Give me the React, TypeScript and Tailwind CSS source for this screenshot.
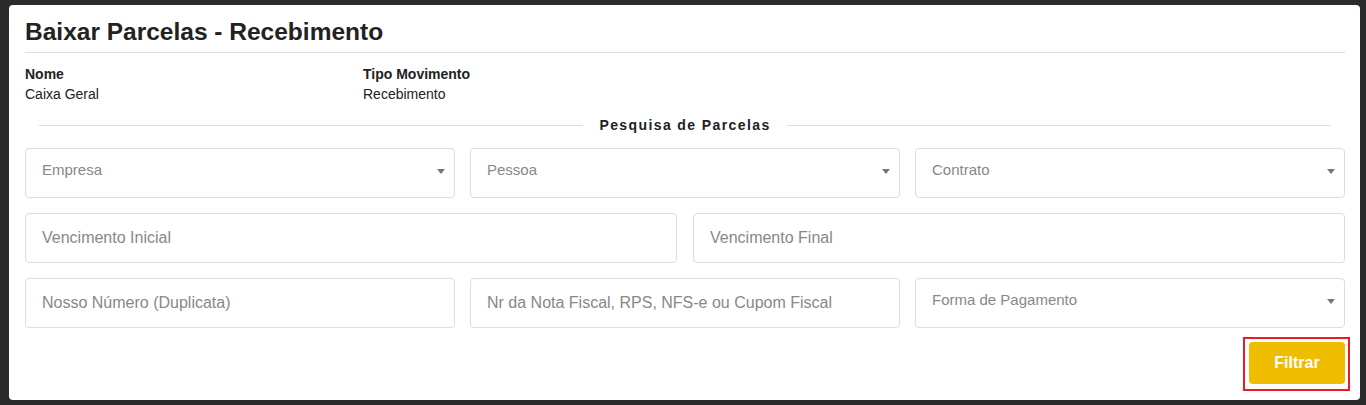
const font = { fontFamily: '"Liberation Sans", Arial, sans-serif' };

const SelectBox = ({ label }: { label: string }) => (
  <div className="flex h-[50px] items-center justify-between rounded-[4px] border border-[#dddddd] bg-white pl-4 pr-[9px]">
    <span className="-mt-[5px] text-[15px] text-[#888888]">{label}</span>
    <svg width="8" height="5" viewBox="0 0 8 5" className="-mt-[3px]">
      <path d="M0 0 L8 0 L4 5 Z" fill="#777777" />
    </svg>
  </div>
);

const TextBox = ({ label }: { label: string }) => (
  <input
    placeholder={label}
    className="h-[50px] w-full rounded-[4px] border border-[#dddddd] bg-white px-4 text-[16px] text-[#333] outline-none placeholder:text-[#888888]"
  />
);

const App = () => {
  return (
    <div className="min-h-screen bg-[#2b2b2b] pt-[5px]" style={font}>
      <div className="ml-[9px] w-[1351px] rounded-[4px] bg-white pb-4 pl-4 pr-[15px] pt-[13px] text-[#222222]">
        <div className="border-b border-[#e0e0e0] pb-[7px]">
          <h1 className="text-[24.5px] font-bold leading-[27px]">
            Baixar Parcelas - Recebimento
          </h1>
        </div>

        <div className="mt-[11px] flex text-[14px] leading-[20px]">
          <div className="w-[338px]">
            <div className="font-bold">Nome</div>
            <div>Caixa Geral</div>
          </div>
          <div>
            <div className="font-bold">Tipo Movimento</div>
            <div>Recebimento</div>
          </div>
        </div>

        <div className="mx-[14px] mt-[11px] flex items-center">
          <div className="h-px flex-1 bg-[#dddddd]" />
          <span className="px-4 text-[14px] font-bold leading-[20px] tracking-[1.4px]">
            Pesquisa de Parcelas
          </span>
          <div className="h-px flex-1 bg-[#dddddd]" />
        </div>

        <div className="mt-[13px] flex flex-col gap-[15px]">
          <div className="grid grid-cols-3 gap-[15px]">
            <SelectBox label="Empresa" />
            <SelectBox label="Pessoa" />
            <SelectBox label="Contrato" />
          </div>
          <div className="grid grid-cols-2 gap-[16px]">
            <TextBox label="Vencimento Inicial" />
            <TextBox label="Vencimento Final" />
          </div>
          <div className="grid grid-cols-3 gap-[15px]">
            <TextBox label="Nosso Número (Duplicata)" />
            <TextBox label="Nr da Nota Fiscal, RPS, NFS-e ou Cupom Fiscal" />
            <SelectBox label="Forma de Pagamento" />
          </div>
        </div>

        <div className="mt-[14px] flex justify-end">
          <div className="relative">
            <button className="h-[42px] w-[96px] rounded-[4px] bg-[#f0bc00] text-[16px] font-bold text-white">
              Filtrar
            </button>
            <div className="pointer-events-none absolute -bottom-[7px] -left-[6px] -right-[5px] -top-[5px] border-2 border-[#e81c24]" />
          </div>
        </div>
      </div>
    </div>
  );
};

export default App;
